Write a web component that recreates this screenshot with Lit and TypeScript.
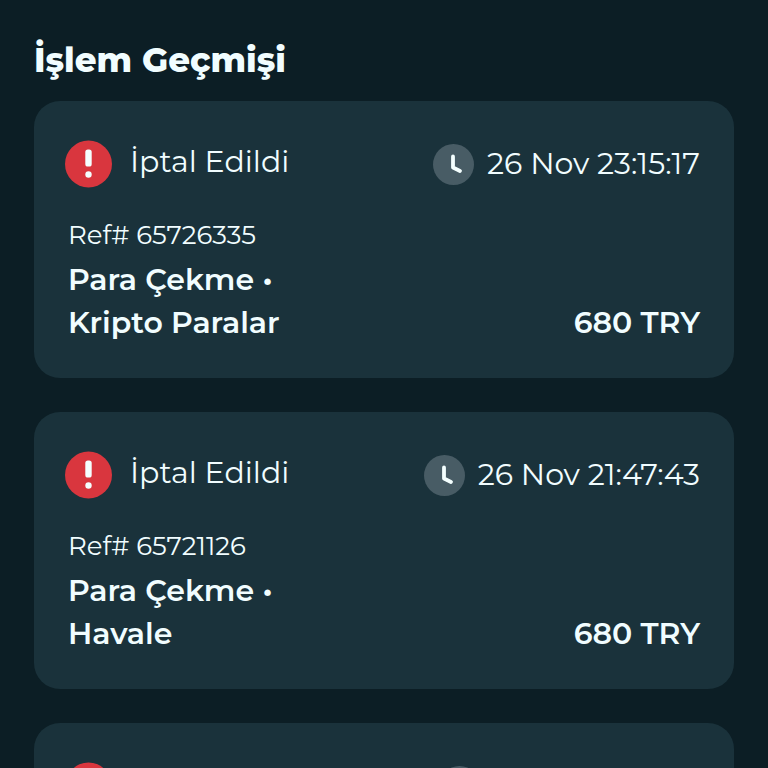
import { LitElement, html, css, svg } from "lit";
import { customElement, property } from "lit/decorators.js";

interface Transaction {
  status: string;
  date: string;
  iso: string;
  reference: string;
  kind: string;
  method: string;
  amount: string;
}

const transactions: Transaction[] = [
  { status: "İptal Edildi", date: "26 Nov 23:15:17", iso: "11-26T23:15:17", reference: "65726335", kind: "Para Çekme", method: "Kripto Paralar", amount: "680 TRY" },
  { status: "İptal Edildi", date: "26 Nov 21:47:43", iso: "11-26T21:47:43", reference: "65721126", kind: "Para Çekme", method: "Havale", amount: "680 TRY" },
  { status: "İptal Edildi", date: "26 Nov 21:31:17", iso: "11-26T21:31:17", reference: "65721126", kind: "Para Çekme", method: "Havale", amount: "680 TRY" },
];

const alertIcon = svg`
  <svg class="alert" viewBox="0 0 48 48" aria-hidden="true">
    <circle cx="23.5" cy="24" r="23.5" fill="#d9363e" />
    <rect x="20.3" y="9.5" width="6.4" height="17" rx="2.6" fill="#f4ffff" />
    <circle cx="23.5" cy="34.5" r="3.2" fill="#f4ffff" />
  </svg>`;

const clockIcon = svg`
  <svg class="clock" viewBox="0 0 41 41" aria-hidden="true">
    <circle cx="20.5" cy="20.5" r="20.5" fill="#485c65" />
    <path d="M20 12.5V23.5L27 27" fill="none" stroke="#f4ffff" stroke-width="3.8" stroke-linecap="round" stroke-linejoin="round" />
  </svg>`;

@customElement("transaction-card")
export class TransactionCard extends LitElement {
  @property({ attribute: false }) item!: Transaction;

  static styles = css`
    :host {
      display: block;
      flex: none;
    }
    .card {
      box-sizing: border-box;
      padding: 39px 34px 34px 31px;
      border-radius: 26px;
      background: #1a323b;
    }
    .head,
    .status,
    .date,
    .body {
      display: flex;
      align-items: center;
    }
    .head,
    .body {
      justify-content: space-between;
    }
    .head {
      height: 48px;
      font-size: 30px;
      font-weight: 400;
      white-space: nowrap;
    }
    .status {
      gap: 17px;
    }
    .label {
      padding-bottom: 6px;
    }
    .date {
      gap: 13px;
    }
    .date time {
      padding-bottom: 2px;
    }
    .alert {
      width: 48px;
      height: 48px;
    }
    .clock {
      width: 41px;
      height: 41px;
    }
    .body {
      align-items: flex-end;
      padding-left: 3px;
      margin-top: 27px;
    }
    .ref {
      margin: 0 0 3px;
      font-size: 26px;
      line-height: 40px;
      font-weight: 400;
    }
    .title,
    .amount {
      margin: 0;
      font-size: 30px;
      line-height: 43px;
      font-weight: 600;
    }
    .method {
      display: block;
    }
  `;

  render() {
    const t = this.item;
    return html`
      <article class="card">
        <div class="head">
          <div class="status">${alertIcon}<span class="label">${t.status}</span></div>
          <div class="date">${clockIcon}<time datetime=${t.iso}>${t.date}</time></div>
        </div>
        <div class="body">
          <div>
            <p class="ref">Ref# ${t.reference}</p>
            <h2 class="title">${t.kind} •<span class="method">${t.method}</span></h2>
          </div>
          <p class="amount">${t.amount}</p>
        </div>
      </article>
    `;
  }
}

@customElement("app-root")
export class AppRoot extends LitElement {
  static styles = css`
    :host {
      display: block;
      box-sizing: border-box;
      height: 100vh;
      overflow-y: auto;
      scrollbar-width: none;
      padding: 36px 34px 0;
      background: #0c1e25;
      color: #f1fdff;
      font-family: Montserrat, Inter, "Open Sans", sans-serif;
    }
    .heading {
      margin: 0 0 17px;
      font-size: 34px;
      line-height: 48px;
      font-weight: 800;
    }
    .list {
      display: flex;
      flex-direction: column;
      gap: 34px;
    }
  `;

  render() {
    return html`
      <main>
        <h1 class="heading">İşlem Geçmişi</h1>
        <section class="list">
          ${transactions.map((t) => html`<transaction-card .item=${t}></transaction-card>`)}
        </section>
      </main>
    `;
  }
}
